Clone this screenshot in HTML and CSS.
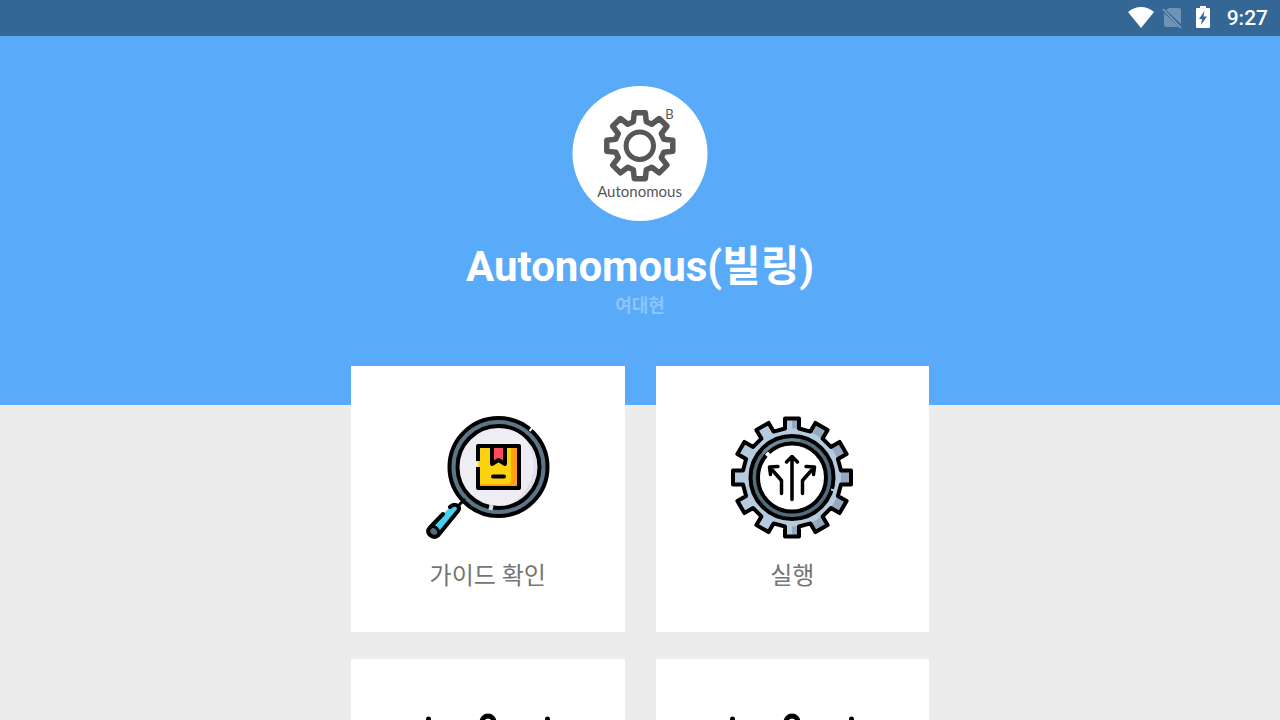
FILE: index.html
```html
<!DOCTYPE html>
<html lang="ko">
<head>
    <meta charset="UTF-8">
    <meta name="viewport" content="width=device-width, initial-scale=1.0">
    <title>Autonomous(빌링)</title>
    <link rel="stylesheet" href="styles.css">
</head>
<body>
    <!-- Device status bar -->
    <div class="status-bar">
        <svg class="status-icon" viewBox="0 0 28 28" aria-hidden="true">
            <path d="M14 24 L1 8 Q7 3 14 3 T27 8 Z" fill="#fff"/>
        </svg>
        <svg class="status-icon" viewBox="0 0 28 28" aria-hidden="true">
            <path d="M11 4 H21 Q23 4 23 6 V20 L8 6 Z M6 9 L21 23 H8 Q6 23 6 21 Z" fill="#6f93b5"/>
            <path d="M5 5 L23 24" stroke="#7f9fbd" stroke-width="1.5"/>
        </svg>
        <svg class="status-icon" viewBox="0 0 28 28" aria-hidden="true">
            <path d="M11 2 H17 V4 H20 Q21 4 21 5 V23 Q21 24 20 24 H8 Q7 24 7 23 V5 Q7 4 8 4 H11 Z" fill="#fff"/>
            <path d="M15.500 7 L10 15 H13 L12 21 L18 12.500 H14.500 Z" fill="#346796"/>
        </svg>
        <span class="time">9:27</span>
    </div>

    <header class="hero">
        <svg class="logo" viewBox="0 0 135 135" role="img" aria-label="Autonomous">
            <circle cx="67.500" cy="67.500" r="67.500" fill="#fff"/>
            <g transform="translate(67.300 59.700)" fill="none" stroke="#575757" stroke-linejoin="round">
                <path stroke-width="5.500" d="M-6.500 -24 L-5.500 -33 H5.500 L6.500 -24 L12 -21.500 L19.400 -27.200 L27.200 -19.400 L21.500 -12 L24 -6.500 L33 -5.500 V5.500 L24 6.500 L21.500 12 L27.200 19.400 L19.400 27.200 L12 21.500 L6.500 24 L5.500 33 H-5.500 L-6.500 24 L-12 21.500 L-19.400 27.200 L-27.200 19.400 L-21.500 12 L-24 6.500 L-33 5.500 V-5.500 L-24 -6.500 L-21.500 -12 L-27.200 -19.400 L-19.400 -27.200 L-12 -21.500 Z"/>
                <circle r="13.700" stroke-width="5"/>
            </g>
            <text class="logo-mark" x="97" y="33">B</text>
            <text class="logo-name" x="67" y="111">Autonomous</text>
        </svg>
        <h1>Autonomous(빌링)</h1>
        <p class="owner">여대현</p>
    </header>

    <!-- Menu cards -->
    <main class="menu">
        <button class="card" type="button">
            <svg class="card-icon" viewBox="0 0 124 124" aria-hidden="true">
                <circle cx="72.500" cy="51" r="45" fill="none" stroke="#5b7687" stroke-width="8"/>
                <circle cx="72.500" cy="51" r="41" fill="#ededf3"/>
                <path d="M97 20 A39 39 0 0 1 84 88 A45 45 0 0 0 97 20" fill="#dfe1ec"/>
                <g fill="none" stroke="#000" stroke-width="4">
                    <circle cx="72.500" cy="51" r="49"/>
                    <circle cx="72.500" cy="51" r="41"/>
                </g>
                <path d="M103.500 15 L107.500 10.500" stroke="#fff" stroke-width="2"/>
                <path d="M63 91 L67 92" stroke="#d9dde3" stroke-width="5"/>
                <rect x="52" y="30" width="41" height="42" fill="#fbd210"/>
                <path d="M85 30 H93 V72 H54 V68 H81 Q85 68 85 64 Z" fill="#ff9f12"/>
                <path d="M66 30 H79 V48 L72.500 44 L66 48 Z" fill="#ff4b5e"/>
                <g fill="none" stroke="#000" stroke-width="4" stroke-linejoin="round">
                    <path d="M52 45 V30 H93 V72 H52 V51"/>
                    <path d="M66 30 V48 L72.500 44 L79 48 V30"/>
                    <path d="M67 60.500 H78" stroke-linecap="round"/>
                    <path d="M32 90 L39 83" stroke-width="3"/>
                </g>
                <path d="M3.500 112 L24 91 Q28 87 32 90 Q34 92 32 95 L12 119.500 Q8 122.500 4 119 Q0.500 115.500 3.500 112" fill="#45d1f2"/>
                <path d="M3 111 Q9 109 13 118 Q8 123 4 119 Q0 115 3 111" fill="#536d7e"/>
                <g fill="none" stroke="#000" stroke-width="4" stroke-linecap="round" stroke-linejoin="round">
                    <path d="M17 98 L3.500 112 Q0.500 115.500 4 119 Q8 122.500 12 119.500 L32 95 Q34 92 32 90 Q28 87 24 91"/>
                    <path d="M6 110 Q12 111 13 117" stroke-width="3"/>
                </g>
            </svg>
            <span class="card-label">가이드 확인</span>
        </button>

        <button class="card" type="button">
            <svg class="card-icon" viewBox="-62 -61.500 124 124" aria-hidden="true">
                <defs>
                    <path id="gear" d="M-7 -49 V-59 H7 V-49 L18.400 -45.900 L23.400 -54.600 L35.600 -47.600 L30.600 -38.900 L38.900 -30.600 L47.600 -35.600 L54.600 -23.400 L45.900 -18.400 L49 -7 H59 V7 H49 L45.900 18.400 L54.600 23.400 L47.600 35.600 L38.900 30.600 L30.600 38.900 L35.600 47.600 L23.400 54.600 L18.400 45.900 L7 49 V59 H-7 V49 L-18.400 45.900 L-23.400 54.600 L-35.600 47.600 L-30.600 38.900 L-38.900 30.600 L-47.600 35.600 L-54.600 23.400 L-45.900 18.400 L-49 7 H-59 V-7 H-49 L-45.900 -18.400 L-54.600 -23.400 L-47.600 -35.600 L-38.900 -30.600 L-30.600 -38.900 L-35.600 -47.600 L-23.400 -54.600 L-18.400 -45.900 Z"/>
                    <clipPath id="gear-clip"><use href="#gear"/></clipPath>
                </defs>
                <use href="#gear" fill="#b7cbdf"/>
                <path d="M0 -62 H62 V62 H0 V49 A49 49 0 0 0 0 -49 Z" fill="#93a9bf" clip-path="url(#gear-clip)"/>
                <use href="#gear" fill="none" stroke="#000" stroke-width="4" stroke-linejoin="round"/>
                <circle r="37.500" fill="#fff" stroke="#536c7c" stroke-width="8"/>
                <path d="M-29 -24 A37.500 37.500 0 0 1 8 -37" fill="none" stroke="#6f8998" stroke-width="3"/>
                <g fill="none" stroke="#000" stroke-width="4">
                    <circle r="41.500"/>
                    <circle r="34"/>
                </g>
                <path d="M-25.500 -24.500 L-23 -22" stroke="#fff" stroke-width="4"/>
                <path d="M39 12 L44 13.500" stroke="#b7cbdf" stroke-width="2"/>
                <g fill="none" stroke="#000" stroke-width="3.500" stroke-linecap="round" stroke-linejoin="round">
                    <path d="M0 22 V-21 M-5.500 -15.500 L0 -21 L5.500 -15.500"/>
                    <path d="M-10.500 16 V3 L-22 -10 M-14 -11 L-22.500 -10.500 L-21.500 -3"/>
                    <path d="M10.500 16 V3 L22 -10 M14 -11 L22.500 -10.500 L21.500 -3"/>
                </g>
            </svg>
            <span class="card-label">실행</span>
        </button>

        <button class="card" type="button" aria-label="메뉴 3">
            <svg class="card-icon" viewBox="0 0 124 124" aria-hidden="true">
                <g fill="none" stroke="#000" stroke-width="5" stroke-linecap="round">
                    <circle cx="62" cy="13" r="6"/>
                    <path d="M2.500 10 V60 M121.500 10 V60 M62 20 V60"/>
                </g>
            </svg>
        </button>

        <button class="card" type="button" aria-label="메뉴 4">
            <svg class="card-icon" viewBox="0 0 124 124" aria-hidden="true">
                <g fill="none" stroke="#000" stroke-width="5" stroke-linecap="round">
                    <circle cx="62" cy="13" r="6"/>
                    <path d="M2.500 10 V60 M121.500 10 V60 M62 20 V60"/>
                </g>
            </svg>
        </button>
    </main>
</body>
</html>
```
FILE: styles.css
```css
body {
    font-family: Roboto, "Noto Sans CJK KR", sans-serif;
    background-color: #ececec;
    height: 100vh;
    margin: 0;
    overflow: hidden;
}
.status-bar {
    display: flex;
    align-items: center;
    justify-content: flex-end;
    gap: 3px;
    height: 36px;
    padding-right: 12px;
    background-color: #346796;
    color: white;
}
.status-icon {
    width: 28px;
    height: 28px;
}
.time {
    margin-left: 7px;
    font-size: 21px;
    font-weight: 500;
    line-height: 36px;
}
.hero {
    display: flex;
    flex-direction: column;
    align-items: center;
    padding: 50px 0 86px;
    background-color: #59abfa;
    text-align: center;
}
.logo {
    width: 136px;
    height: 135px;
}
.logo-mark,
.logo-name {
    font-family: Lato, sans-serif;
    fill: #575757;
    text-anchor: middle;
}
.logo-mark {
    font-size: 13px;
}
.logo-name {
    font-size: 15px;
}
.hero h1 {
    margin: 20px 0 0;
    color: white;
    font-size: 42px;
    font-weight: 700;
    line-height: 52px;
}
.owner {
    margin: 0;
    color: #8cc5fc;
    font-size: 18px;
    font-weight: 700;
    line-height: 26px;
}
.menu {
    display: grid;
    grid-template-columns: 1fr 1fr;
    gap: 27px 31px;
    width: 90%;
    max-width: 578px;
    margin: -39px auto 0;
}
.card {
    display: flex;
    flex-direction: column;
    align-items: center;
    min-height: 266px;
    padding: 50px 0 0;
    border: 0;
    background: white;
    color: #757575;
    font-family: inherit;
    cursor: pointer;
}
.card-icon {
    width: 124px;
    height: 124px;
}
.card-label {
    margin-top: 18px;
    font-size: 24px;
    line-height: 36px;
}
```
